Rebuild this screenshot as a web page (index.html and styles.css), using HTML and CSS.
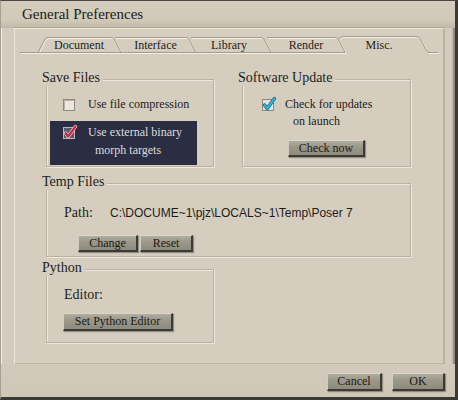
FILE: index.html
```html
<!DOCTYPE html>
<html>
<head>
<meta charset="utf-8">
<link rel="stylesheet" href="styles.css">
</head>
<body>
<div class="window">
  <div class="titlebar">General Preferences</div>
  <div class="panel">
    <svg class="tabs" width="430" height="27" viewBox="14 28 430 27">
      <g class="tab-light" transform="translate(1 1)">
        <path d="M20 52.5 H345"/>
        <path d="M428 52.5 H438"/>
        <path d="M38 52.5 L45 39 Q46.5 37.5 49 37.5 H111 Q113 37.5 114 39 L121 52.5"/>
        <path d="M115 37.5 H186 Q188 37.5 189 39 L196 52.5"/>
        <path d="M191 37.5 H261 Q263 37.5 264 39 L271 52.5"/>
        <path d="M267 37.5 H335 Q337 37.5 338 39 L345 52.5"/>
        <path d="M339 39 Q340 36.5 343 36.5 H416 Q419 36.5 421 40 L426 50 Q428 52.5 431 52.5"/>
      </g>
      <g class="tab-dark">
        <path d="M20 52.5 H345"/>
        <path d="M428 52.5 H438"/>
        <path d="M38 52.5 L45 39 Q46.5 37.5 49 37.5 H111 Q113 37.5 114 39 L121 52.5"/>
        <path d="M115 37.5 H186 Q188 37.5 189 39 L196 52.5"/>
        <path d="M191 37.5 H261 Q263 37.5 264 39 L271 52.5"/>
        <path d="M267 37.5 H335 Q337 37.5 338 39 L345 52.5"/>
        <path d="M339 39 Q340 36.5 343 36.5 H416 Q419 36.5 421 40 L426 50 Q428 52.5 431 52.5"/>
      </g>
      <g class="tab-labels">
        <text x="79" y="49">Document</text>
        <text x="155.5" y="49">Interface</text>
        <text x="229" y="49">Library</text>
        <text x="306" y="49">Render</text>
        <text x="379" y="49">Misc.</text>
      </g>
    </svg>

    <div class="content">
      <div class="row">
        <section class="group g-save">
          <div class="legend">Save Files</div>
          <div class="check-row">
            <svg class="cb" width="12" height="12" viewBox="0 0 12 12">
              <rect x="0.5" y="0.5" width="11" height="11" fill="#ebe7de" stroke="#8d897f"/>
              <path d="M1.5 10.5 V1.5 H10.5" fill="none" stroke="#b6b1a5"/>
            </svg>
            <span class="cb-text">Use file compression</span>
          </div>
          <div class="highlight">
            <svg class="cb cb-dark" width="12" height="12" viewBox="0 0 12 12">
              <rect x="0.5" y="0.5" width="11" height="11" fill="#5c5b6c" stroke="#b8b7c0"/>
              <path d="M2.5 6 L5.2 9.5 L12.5 -0.5" fill="none" stroke="#f2e8ea" stroke-width="3.4" stroke-linecap="round" stroke-linejoin="round"/>
              <path d="M2.5 6 L5.2 9.5 L12.5 -0.5" fill="none" stroke="#d8203a" stroke-width="2.2" stroke-linecap="round" stroke-linejoin="round"/>
            </svg>
            <div class="hl-text">
              <span class="line">Use external binary</span>
              <span class="line indent">morph targets</span>
            </div>
          </div>
        </section>

        <section class="group g-update">
          <div class="legend">Software Update</div>
          <div class="check-row upd">
            <svg class="cb" width="12" height="12" viewBox="0 0 12 12">
              <rect x="0.5" y="0.5" width="11" height="11" fill="#dfe3e6" stroke="#8d897f"/>
              <path d="M2.5 6 L5.2 9.5 L12.5 -0.5" fill="none" stroke="#1f4f6a" stroke-width="3.4" stroke-linecap="round" stroke-linejoin="round"/>
              <path d="M2.5 6 L5.2 9.5 L12.5 -0.5" fill="none" stroke="#33b3d6" stroke-width="2.2" stroke-linecap="round" stroke-linejoin="round"/>
            </svg>
            <div class="cb-text">
              <span class="line">Check for updates</span>
              <span class="line indent2">on launch</span>
            </div>
          </div>
          <button class="btn btn-check">Check now</button>
        </section>
      </div>

      <section class="group g-temp">
        <div class="legend">Temp Files</div>
        <div class="path-row">
          <span class="field-label">Path:</span>
          <span class="path-value">C:\DOCUME~1\pjz\LOCALS~1\Temp\Poser 7</span>
        </div>
        <div class="btn-row">
          <button class="btn btn-change">Change</button>
          <button class="btn btn-reset">Reset</button>
        </div>
      </section>

      <section class="group g-python">
        <div class="legend">Python</div>
        <div class="editor-row"><span class="field-label">Editor:</span></div>
        <button class="btn btn-python">Set Python Editor</button>
      </section>
    </div>
  </div>
  <div class="footer">
    <button class="btn btn-cancel">Cancel</button>
    <button class="btn btn-ok">OK</button>
  </div>
</div>
</body>
</html>
```

FILE: styles.css
```css
* {
  box-sizing: border-box;
}

html, body {
  margin: 0;
  padding: 0;
}

body {
  width: 458px;
  height: 400px;
  overflow: hidden;
  font-family: "Liberation Serif", "Times New Roman", serif;
  color: #1d1c19;
  background: #d3ccbc;
}

.window {
  width: 458px;
  height: 400px;
  display: flex;
  flex-direction: column;
  background: #d3ccbc;
  border-top: 1px solid #4a4842;
  border-left: 1px solid #a39f93;
  border-right: 3px solid #3a3935;
  border-bottom: 3px solid #3a3935;
  box-shadow: inset 1px 1px 0 #f1ede4, inset -2px -2px 2px #85817a;
}

.titlebar {
  height: 27px;
  flex: none;
  padding-left: 21px;
  font-size: 15px;
  line-height: 27px;
  background: linear-gradient(#d4cdbd, #d1cab9 70%, #c0b9a8);
}

.panel {
  flex: none;
  margin-left: 13px;
  width: 430px;
  height: 336px;
  background: #d5cebf;
  box-shadow: inset 1px 1px 0 #ece7dc, inset -1px -1px 0 #bdb6a6, 0 -1px 0 #aca595, 1px 0 0 #b8b1a1;
}

.tabs {
  display: block;
}

.tab-light path {
  fill: none;
  stroke: #f4f0e7;
  stroke-width: 1;
}

.tab-dark path {
  fill: none;
  stroke: #a39c8b;
  stroke-width: 1;
}

.tab-labels text {
  font-family: "Liberation Serif", "Times New Roman", serif;
  font-size: 12px;
  fill: #1f1e1b;
  text-anchor: middle;
}

.content {
  padding: 24px 0 0 32px;
}

.row {
  display: flex;
  gap: 28px;
}

.group {
  border: 1px solid #b9b2a2;
  box-shadow: inset 1px 1px 0 #ede8dd, 1px 1px 0 #ede8dd;
}

.legend {
  width: max-content;
  height: 16px;
  margin: -10px 0 0 -5px;
  padding-right: 3px;
  background: #d5cebf;
  font-size: 14px;
  line-height: 16px;
}

.g-save {
  width: 168px;
  height: 88px;
}

.g-update {
  width: 169px;
  height: 88px;
}

.check-row {
  display: flex;
  align-items: flex-start;
  margin-top: 10px;
  padding-left: 16px;
  font-size: 12px;
  line-height: 17px;
}

.check-row .cb {
  margin-top: 3px;
}

.cb {
  flex: none;
  display: block;
  overflow: visible;
}

.cb-text {
  margin-left: 13px;
}

.check-row.upd {
  padding-left: 19px;
}

.check-row.upd .cb-text {
  margin-left: 11px;
}

.line {
  display: block;
}

.indent {
  padding-left: 7px;
}

.indent2 {
  padding-left: 8px;
}

.highlight {
  display: flex;
  align-items: flex-start;
  margin: 8px 0 0 3px;
  width: 147px;
  height: 44px;
  padding: 2px 0 0 13px;
  background: #2b2e43;
  color: #dcdcdc;
  font-size: 12px;
  line-height: 18px;
}

.highlight .cb {
  margin-top: 4px;
}

.hl-text {
  margin-left: 13px;
}

.btn {
  display: block;
  padding: 0;
  font-family: "Liberation Serif", "Times New Roman", serif;
  font-size: 12px;
  color: #1b1a17;
  text-align: center;
  background: linear-gradient(#b0ad9f, #9c998b 40%, #8e8b7d);
  border-style: solid;
  border-width: 1px 2px 2px 1px;
  border-color: #dad6c9 #3c3a33 #3c3a33 #d0ccbf;
  box-shadow: 1px 1px 1px rgba(0, 0, 0, 0.3);
}

.btn-check {
  margin: 10px 0 0 45px;
  width: 77px;
  height: 17px;
  line-height: 14px;
}

.g-temp {
  margin-top: 16px;
  width: 365px;
  height: 74px;
}

.path-row {
  display: flex;
  align-items: center;
  height: 16px;
  margin-top: 15px;
  padding-left: 17px;
}

.field-label {
  font-size: 14px;
  line-height: 16px;
}

.path-row .field-label {
  width: 46px;
}

.path-value {
  font-family: "Liberation Sans", Arial, sans-serif;
  font-size: 12px;
  line-height: 16px;
}

.btn-row {
  display: flex;
  gap: 2px;
  margin-top: 14px;
  padding-left: 31px;
}

.btn-change {
  width: 60px;
  height: 17px;
  line-height: 14px;
}

.btn-reset {
  width: 53px;
  height: 17px;
  line-height: 14px;
}

.g-python {
  margin-top: 12px;
  width: 168px;
  height: 74px;
}

.editor-row {
  margin-top: 9px;
  padding-left: 17px;
  height: 16px;
}

.btn-python {
  margin: 12px 0 0 16px;
  width: 110px;
  height: 18px;
  line-height: 15px;
}

.footer {
  flex: 1;
  display: flex;
  justify-content: flex-end;
  align-items: flex-start;
  gap: 10px;
  padding: 9px 10px 0 0;
  background: linear-gradient(#d2cbbb, #cec7b7);
}

.btn-cancel {
  width: 55px;
  height: 18px;
  line-height: 15px;
}

.btn-ok {
  width: 53px;
  height: 18px;
  line-height: 15px;
}
```
